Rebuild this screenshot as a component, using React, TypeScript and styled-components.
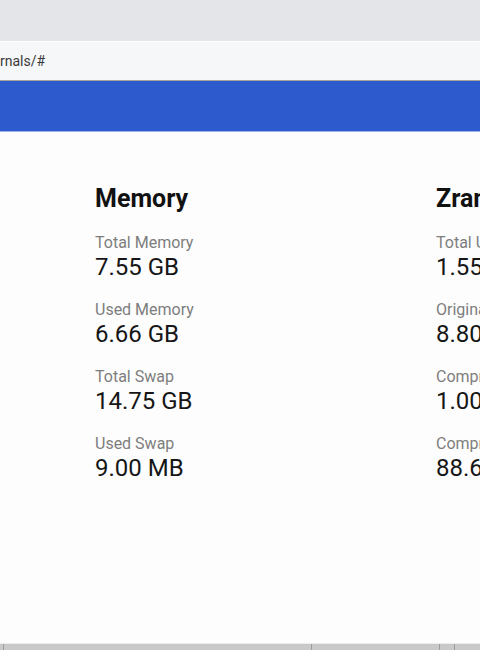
import React from "react";
import styled, { createGlobalStyle } from "styled-components";

const Global = createGlobalStyle`
  html, body { margin: 0; padding: 0; background: #fdfdfd; }
  body { font-family: Roboto, "Noto Sans", "Liberation Sans", sans-serif; overflow: hidden; }
  * { box-sizing: border-box; }
`;

const Window = styled.div`
  width: 480px;
  height: 650px;
  display: flex;
  flex-direction: column;
  overflow: hidden;
`;

const TabStrip = styled.div`
  height: 41px;
  background: #e3e5e8;
  flex: none;
`;

const AddressBar = styled.div`
  height: 40px;
  background: #f6f7f8;
  border-top: 1px solid #ffffff;
  border-bottom: 1px solid #a6a79c;
  display: flex;
  align-items: center;
  flex: none;
`;

const Url = styled.span`
  font-size: 14px;
  color: #3a3a3a;
`;

const AppBar = styled.div`
  height: 51px;
  background: #2d5bcd;
  border-bottom: 1px solid #9bb3ee;
  flex: none;
`;

const Content = styled.main`
  flex: 1;
  display: grid;
  grid-template-columns: 341px 341px;
  align-content: start;
  padding: 51px 0 0 95px;
  overflow: hidden;
  background: #fdfdfd;
`;

const Section = styled.section`
  display: flex;
  flex-direction: column;
  gap: 19px;
  white-space: nowrap;
`;

const Heading = styled.h2`
  margin: 0 0 -1px;
  font-size: 25px;
  line-height: 32px;
  font-weight: 700;
  color: #111111;
`;

const Stat = styled.div`
  display: flex;
  flex-direction: column;
`;

const Label = styled.span`
  font-size: 16px;
  line-height: 20px;
  color: #7d7d7d;
`;

const Value = styled.span`
  font-size: 24px;
  line-height: 28px;
  color: #161616;
`;

const StatusBar = styled.div`
  height: 7px;
  flex: none;
  background: #c9c9c9;
  border-top: 1px solid #ececec;
  display: flex;
`;

const StatusCell = styled.div<{ $w: number }>`
  width: ${(p) => p.$w}px;
  flex: none;
  border-right: 1px solid #9d9d9d;
`;

const sections = [
  {
    title: "Memory",
    stats: [
      ["Total Memory", "7.55 GB"],
      ["Used Memory", "6.66 GB"],
      ["Total Swap", "14.75 GB"],
      ["Used Swap", "9.00 MB"],
    ],
  },
  {
    title: "Zram",
    stats: [
      ["Total Used", "1.55 GB"],
      ["Original Data Size", "8.80 GB"],
      ["Compressed Data Size", "1.00 GB"],
      ["Compression Savings", "88.64%"],
    ],
  },
];

export default function App() {
  return (
    <>
      <Global />
      <Window>
        <TabStrip />
        <AddressBar>
          <Url>rnals/#</Url>
        </AddressBar>
        <AppBar />
        <Content>
          {sections.map((s) => (
            <Section key={s.title}>
              <Heading>{s.title}</Heading>
              {s.stats.map(([l, v]) => (
                <Stat key={l}>
                  <Label>{l}</Label>
                  <Value>{v}</Value>
                </Stat>
              ))}
            </Section>
          ))}
        </Content>
        <StatusBar>
          <StatusCell $w={4} />
          <StatusCell $w={308} />
          <StatusCell $w={128} />
          <StatusCell $w={15} />
        </StatusBar>
      </Window>
    </>
  );
}
